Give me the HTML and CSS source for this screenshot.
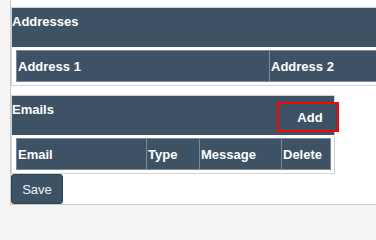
FILE: index.html
```html
<!DOCTYPE html>
<html lang="en">
<head>
  <meta charset="UTF-8" />
  <meta name="viewport" content="width=device-width, initial-scale=1.0" />
  <title>Contacts</title>
  <link rel="stylesheet" href="styles.css">
</head>
<body>
  <div class="panel">
    <div class="box">
      <div class="box-head">Addresses</div>
      <table class="grid">
        <tr>
          <th class="col-address">Address 1</th>
          <th>Address 2</th>
        </tr>
      </table>
    </div>

    <div class="box box-emails">
      <div class="box-head">
        <span>Emails</span>
        <button class="btn-add">Add</button>
      </div>
      <table class="grid grid-emails">
        <tr>
          <th class="col-email">Email</th>
          <th class="col-type">Type</th>
          <th class="col-message">Message</th>
          <th>Delete</th>
        </tr>
      </table>
    </div>

    <button class="btn-save">Save</button>
  </div>
</body>
</html>
```

FILE: styles.css
```css
:root {
  --dark: #3e5266;
  --page: #f5f5f5;
  --line: #d2d2d2;
  --cell-line: #7f8890;
  --text: #ffffff;
}
* { box-sizing: border-box; margin: 0; padding: 0; }
body {
  background: var(--page);
  font-family: "Liberation Sans", Arial, sans-serif;
  font-size: 13px;
  overflow: hidden;
}
.panel {
  margin-left: 10px;
  width: 800px;
  background: #fff;
  border-left: 1px solid #cacaca;
  border-bottom: 1px solid #cacaca;
  padding-top: 7px;
}
.box {
  border: 1px solid var(--line);
  margin-bottom: 9px;
}
.box-emails {
  width: 324px;
  margin-bottom: 0;
}
.box-head {
  height: 39px;
  background: var(--dark);
  color: var(--text);
  font-weight: bold;
  line-height: 15px;
  padding-top: 6px;
  display: flex;
  justify-content: space-between;
  align-items: flex-start;
}
.btn-add {
  width: 62px; height: 30px;
  margin-top: 0; margin-right: -5px;
  background: var(--dark);
  color: var(--text);
  border: 2px solid #f00;
  font: bold 13px "Liberation Sans", Arial, sans-serif;
  text-align: center;
  padding-left: 4px;
}
.grid {
  border-collapse: collapse;
  margin: 3px 4px;
  width: calc(100% - 8px);
}
.grid th {
  height: 31px;
  padding: 0 1px;
  background: var(--dark);
  color: var(--text);
  border: 1px solid var(--cell-line);
  text-align: left;
  font-weight: bold;
}
.col-address { width: 253px; }
.grid-emails { width: 315px; }
.col-email { width: 130px; }
.col-type { width: 53px; }
.col-message { width: 82px; }
.btn-save {
  display: block;
  width: 52px; height: 30px;
  background: var(--dark);
  color: #eef2f6;
  border: 1px solid #2f4052;
  border-radius: 3px;
  font: 13px "Liberation Sans", Arial, sans-serif;
}
```
